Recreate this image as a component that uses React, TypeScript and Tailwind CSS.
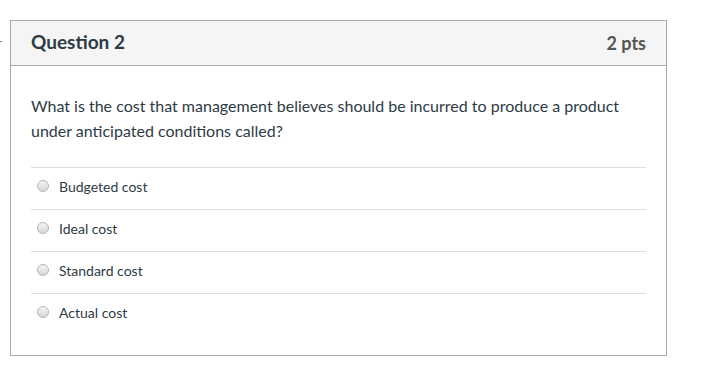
export default function App() {
  const answers = ["Budgeted cost", "Ideal cost", "Standard cost", "Actual cost"];
  return (
    <div className="relative w-[713px] h-[372px] bg-white" style={{ fontFamily: "Lato, 'Open Sans', sans-serif" }}>
      <div className="absolute left-0 top-[41px] w-[2px] h-[1px] bg-[#6b8aa5]" />
      <div className="pt-[20px] pl-[10px]">
        <div className="w-[657px] h-[336px] border border-[#aaaaaa] flex flex-col">
          <div className="h-[45px] bg-[#f5f5f5] border-b border-[#aaaaaa] flex items-center justify-between pl-[20px] pr-[20px]">
            <div className="text-[19px] font-bold text-[#2d3b45] leading-none pb-[3px]">Question 2</div>
            <div className="text-[18px] font-bold text-[#555555] leading-none">2 pts</div>
          </div>
          <div className="px-[20px] pt-[27px]">
            <div className="text-[16px] font-normal leading-[25px] text-[#2d3b45] w-[615px]">
              What is the cost that management believes should be incurred to produce a product under anticipated conditions called?
            </div>
            <div className="mt-[24px]">
              {answers.map((a) => (
                <div key={a} className="h-[42px] border-t border-[#dddddd] flex items-center pl-[6px] pb-[5px]">
                  <div className="w-[12px] h-[12px] rounded-full border border-[#b5b5b5] bg-gradient-to-b from-[#f4f4f4] to-[#d8d8d8]" />
                  <div className="ml-[10px] text-[14px] text-[#2d3b45]">{a}</div>
                </div>
              ))}
            </div>
          </div>
        </div>
      </div>
    </div>
  );
}
